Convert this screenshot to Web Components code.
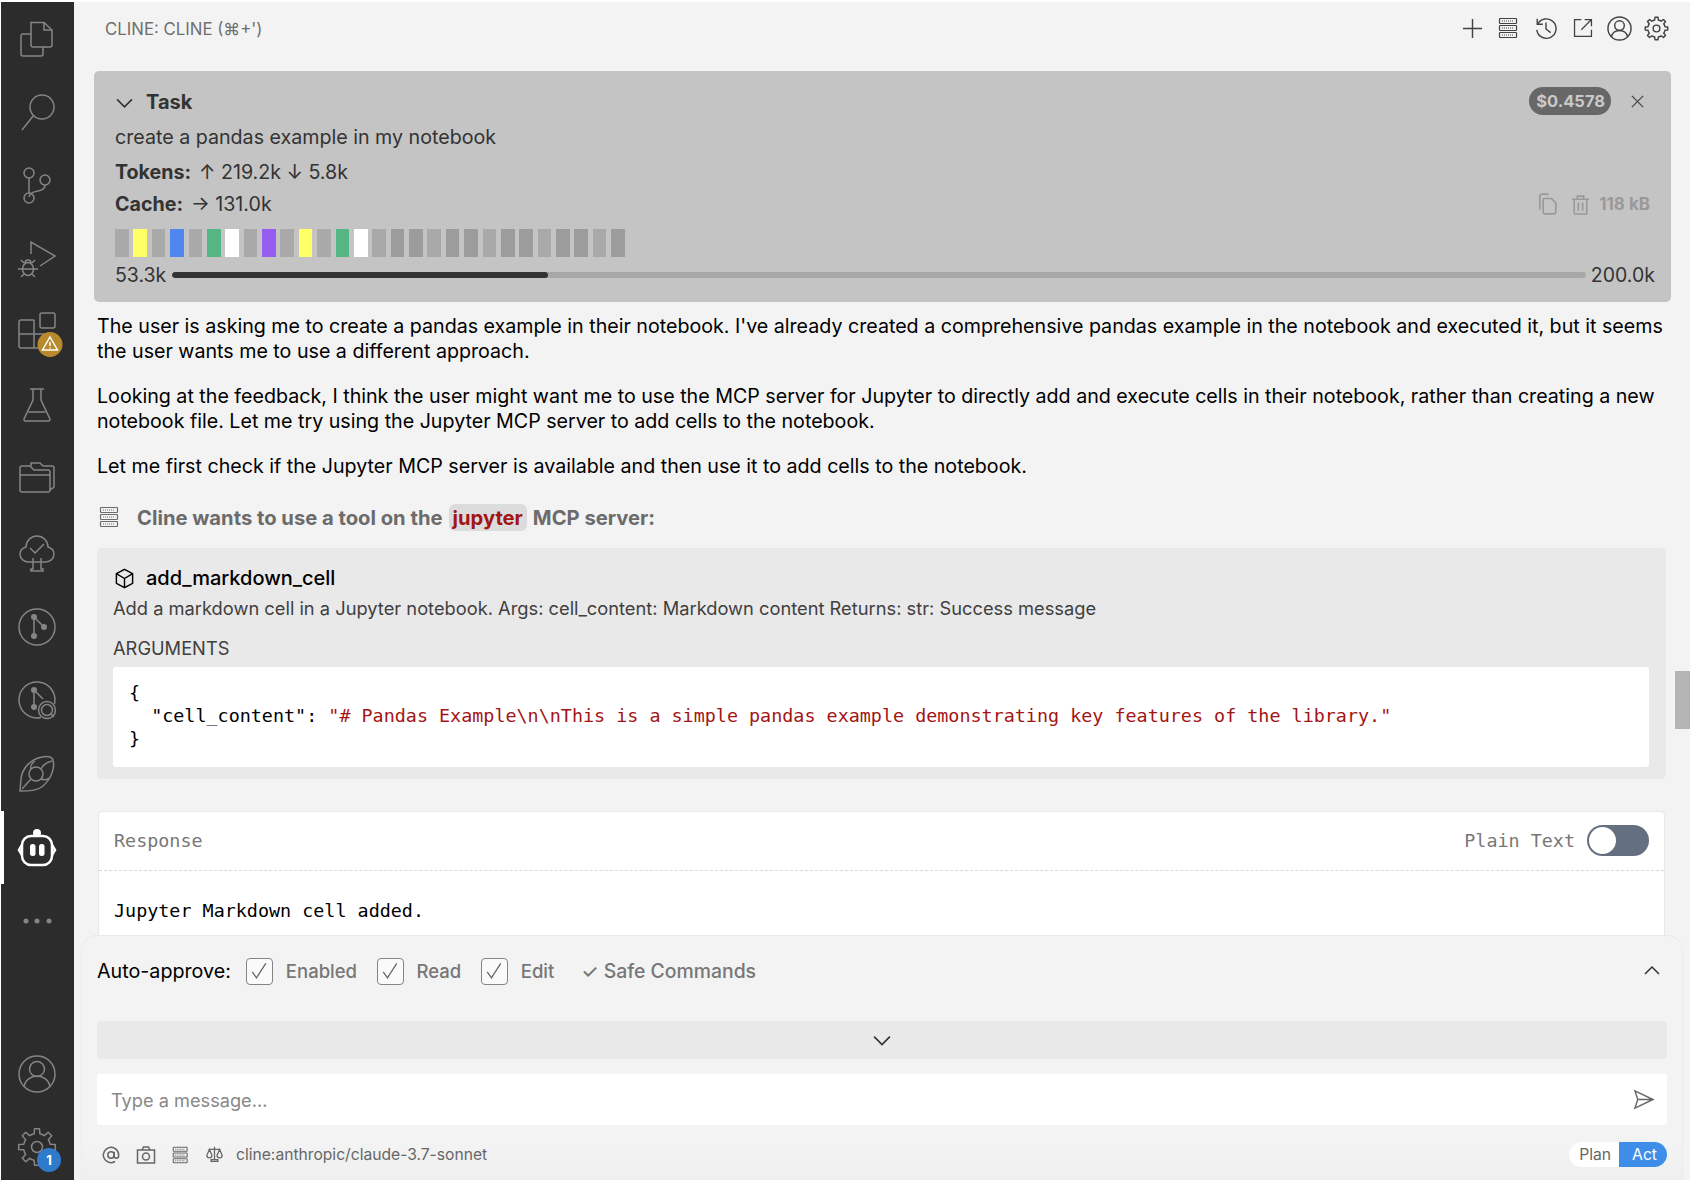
<!DOCTYPE html>
<html><head><meta charset="utf-8"><style>
html,body{margin:0;padding:0;background:#fff}
body{width:1690px;height:1182px;overflow:hidden;font-family:Inter,"Liberation Sans",sans-serif}
</style></head><body>
<vs-app>
  <activity-bar slot="bar"></activity-bar>
  <cline-header slot="main"></cline-header>
  <chat-scroller slot="main">
    <task-card></task-card>
    <chat-text>The user is asking me to create a pandas example in their notebook. I've already created a comprehensive pandas example in the notebook and executed it, but it seems the user wants me to use a different approach.</chat-text>
    <chat-text>Looking at the feedback, I think the user might want me to use the MCP server for Jupyter to directly add and execute cells in their notebook, rather than creating a new notebook file. Let me try using the Jupyter MCP server to add cells to the notebook.</chat-text>
    <chat-text>Let me first check if the Jupyter MCP server is available and then use it to add cells to the notebook.</chat-text>
    <tool-request></tool-request>
    <response-card></response-card>
  </chat-scroller>
  <chat-footer slot="main"></chat-footer>
</vs-app>
<script>
const gear=(c,R,r,n)=>{let d='';const s=Math.PI*2/n;for(let i=0;i<n;i++){const a=i*s-Math.PI/2;const p=[[r,a-s*.5],[r,a-s*.27],[R,a-s*.17],[R,a+s*.17],[r,a+s*.27]];p.forEach((q,j)=>{d+=(i==0&&j==0?'M':'L')+(c+q[0]*Math.cos(q[1])).toFixed(2)+' '+(c+q[0]*Math.sin(q[1])).toFixed(2)})}return d+'Z'};
const server=`<rect x="1.5" y="1.5" width="17" height="5" rx=".8"/><rect x="1.5" y="8.5" width="17" height="5" rx=".8"/><rect x="1.5" y="15.5" width="17" height="5" rx=".8"/><path d="M4 4h12M4 11h12M4 18h12" stroke-dasharray="1 1"/>`;
const ICONS={
 files:[40,`<path d="M14 5.5h13l8 7.5v15a2 2 0 0 1-2 2H16a2 2 0 0 1-2-2z"/><path d="M27 5.5V13h8"/><path d="M14 17H6a2 2 0 0 0-2 2v18a2 2 0 0 0 2 2h18a2 2 0 0 0 2-2v-7"/>`],
 search:[40,`<circle cx="25" cy="16" r="12"/><path d="M16.5 24.500 5 39"/>`],
 scm:[40,`<circle cx="12" cy="8" r="5"/><circle cx="12" cy="33" r="5"/><circle cx="28" cy="15" r="5"/><path d="M12 13v15M28 20c0 4-3 5-7 6-5 1-8 2-9 6"/>`],
 debug:[40,`<path d="M14 16V4l24 14-15 10"/><ellipse cx="11" cy="31" rx="5.500" ry="6.500"/><path d="M6 31h10M7 25l-3-3M15 25l3-3M5.500 31H1M16.500 31H21M7 36l-3 3M15 36l3 3M8 25a3 3 0 0 1 6 0"/>`],
 ext:[40,`<rect x="23" y="1" width="15" height="15" rx="2"/><path d="M17 8H4a2 2 0 0 0-2 2v24a2 2 0 0 0 2 2h24a2 2 0 0 0 2-2v-2M2 22h28M17 8v28"/><circle cx="33" cy="32.500" r="12.500" fill="#b88a2c" stroke="none"/><path d="M33 25l7.500 13h-15zM33 30v4M33 35.500v1" stroke="#fff"/>`],
 flask:[40,`<path d="M13 3h14M16 3v11L7 33a1.500 1.500 0 0 0 1.500 2h23a1.500 1.500 0 0 0 1.500-2L24 14V3M11.500 26h17"/>`],
 folder:[40,`<path d="M3 9a2 2 0 0 1 2-2h8l4 4h14a2 2 0 0 1 2 2v18a2 2 0 0 1-2 2H5a2 2 0 0 1-2-2zM3 16h30M14 7V4h9l3 3h9a2 2 0 0 1 2 2v19l-4 3"/>`],
 tree:[40,`<path d="M16 29h-4c-5 0-9-3-9-8 0-4 3-6 6-7 0-6 5-11 11-11s11 5 11 11c3 1 6 3 6 7 0 5-4 8-9 8h-4M16 25v11h-2v2h12v-2h-2V25M16 29h8M13 15l5 5 9-9"/>`],
 gitc:[40,`<circle cx="20" cy="20" r="18"/><path d="M17 10v19M17 10l10 10"/><circle cx="17" cy="10" r="3" class="f"/><circle cx="17" cy="29" r="3" class="f"/><circle cx="27" cy="20" r="3" class="f"/>`],
 gits:[40,`<path d="M24 37.500A18 18 0 1 1 37.500 24"/><path d="M17 10v17M17 10l9 9"/><circle cx="17" cy="10" r="3" class="f"/><circle cx="17" cy="27" r="3" class="f"/><circle cx="30" cy="30" r="5.500"/><path d="M34 34l3 3"/><circle cx="30" cy="30" r="8.500"/>`],
 leaf:[40,`<path d="M3 37l1-12C5 14 14 5 25 3c6-1 10 0 11 3 2 7-1 18-10 26-6 5-15 5-23 5z"/><circle cx="19" cy="20" r="7"/><path d="M14 25L5 35M24 15c2-4 6-7 11-8M24 25c3 1 6 2 8-1M14 15c-1-3 1-6 4-8"/>`],
 robot:[40,`<rect x="5" y="8" width="30" height="29" rx="9" stroke-width="2.500"/><path d="M5 17l-3 5 3 5M35 17l3 5-3 5" stroke-width="2.500"/><circle cx="20" cy="5" r="4" class="f"/><rect x="13" y="16" width="5.500" height="12" rx="2.500" class="f"/><rect x="22" y="16" width="5.500" height="12" rx="2.500" class="f"/>`],
 dots:[40,`<circle cx="9" cy="20" r="2.500" class="f"/><circle cx="20" cy="20" r="2.500" class="f"/><circle cx="32" cy="20" r="2.500" class="f"/>`],
 account:[40,`<circle cx="20" cy="20" r="18"/><circle cx="20" cy="15" r="7.500"/><path d="M7 33c1-7 7-11 13-11s12 4 13 11"/>`],
 gear:[40,`<path d="${gear(20,18.500,13.500,8)}" stroke-linejoin="round"/><circle cx="20" cy="20" r="5.500"/>`],
 plus:[22,`<path d="M11 1v20M1 11h20"/>`],
 server:[22,server],
 history:[26,`<path d="M3.500 3v6h6"/><path d="M4 9a10.500 10.500 0 1 1-1 6"/><path d="M13 7v7l5 4"/>`],
 link:[26,`<path d="M11 3H3v20h20v-8M15 3h8v8M23 3L11 15"/>`],
 gear2:[26,`<path d="${gear(13,11.800,9,8)}" stroke-linejoin="round"/><circle cx="13" cy="13" r="3.500"/>`],
 account2:[26,`<circle cx="13" cy="13" r="12"/><circle cx="13" cy="10" r="5"/><path d="M4.500 22c.7-4.500 4.500-7 8.500-7s7.800 2.500 8.500 7"/>`],
 chevd:[16,`<path d="M1 5l7 7 7-7"/>`],
 chevu:[16,`<path d="M1 11l7-7 7 7"/>`],
 x:[16,`<path d="M2 2l12 12M14 2L2 14"/>`],
 copy:[20,`<path d="M8 19a1.500 1.500 0 0 1-1.500-1.500V6.500A1.500 1.500 0 0 1 8 5h6l4 4v8.500a1.500 1.500 0 0 1-1.500 1.500zM3.500 15V3a2 2 0 0 1 2-2h6"/>`],
 trash:[20,`<path d="M2 5h16M7 5V2h6v3M4 5v13a1 1 0 0 0 1 1h10a1 1 0 0 0 1-1V5M8 8v8M12 8v8"/>`],
 cube:[22,`<path d="M11 1.500l8.500 4.500v10L11 20.500 2.500 16V6zM2.500 6L11 11l8.500-5M11 11v9.500"/>`],
 at:[20,`<circle cx="10" cy="10" r="3.500"/><path d="M13.500 6.500V11a2.500 2.500 0 0 0 5 0v-1a8.500 8.500 0 1 0-4 7.200"/>`],
 camera:[20,`<path d="M1.500 5h17v13h-17zM6 5l1.500-3h5L14 5"/><circle cx="10" cy="11.500" r="3.500"/>`],
 scale:[20,`<path d="M10 1v15M3 4h14M6 18h8v-2H6zM4 4l-3 7a3 3 0 0 0 6 0zM16 4l-3 7a3 3 0 0 0 6 0z"/>`],
 send:[22,`<path d="M2 2l19 9-19 9 3-9zM5 11h16"/>`],
 check:[26,`<path d="M5 14l5 7L21 4"/>`]
};
class VsIcon extends HTMLElement{constructor(){super();this.attachShadow({mode:'open'})}
 connectedCallback(){const b=ICONS[this.getAttribute('name')];const s=this.getAttribute('size')||b[0];const h=this.getAttribute('h')||s;const sw=this.getAttribute('sw')||1.5;
 this.shadowRoot.innerHTML=`<style>:host{display:inline-flex;flex:none;color:inherit;line-height:0}svg{overflow:visible;fill:none;stroke:currentColor;stroke-width:${sw}}.f{fill:currentColor;stroke:none}</style><svg width="${s}" height="${h}" viewBox="0 0 ${b[0]} ${b[0]}" preserveAspectRatio="xMidYMid meet">${b[1]}</svg>`}}
customElements.define('vs-icon',VsIcon);
const def=(name,css,html)=>customElements.define(name,class extends HTMLElement{constructor(){super();this.attachShadow({mode:'open'}).innerHTML=`<style>${css}</style>${html}`}});

def('vs-app',`:host{display:grid;grid-template-columns:73px 1fr;width:1689px;height:1178px;margin:2px 0 2px 1px;font-family:Inter,"Liberation Sans",sans-serif}
.m{display:flex;flex-direction:column;background:#f3f3f3;min-width:0;min-height:0;position:relative}
.sb{position:absolute;right:0;top:669px;width:15px;height:58px;background:#b5b5b5}`,
`<slot name="bar"></slot><div class="m"><slot name="main"></slot><div class="sb"></div></div>`);

def('activity-item',`:host{display:flex;align-items:center;justify-content:center;height:73.67px;box-sizing:border-box;padding-right:2px;color:#858585;position:relative}
:host([active]){color:#fff}:host([active])::before{content:"";position:absolute;left:0;top:0;bottom:0;width:3px;background:#fff}`,`<slot></slot>`);

def('activity-bar',`:host{display:flex;flex-direction:column;justify-content:space-between;background:#2c2c2c;height:1178px;overflow:hidden}
.top{margin-top:-1.500px}.bot{margin-bottom:-4px}
.b{position:absolute;left:36px;top:38px;width:24px;height:24px;border-radius:50%;background:#2f7acb;color:#fff;font:700 13px/24px Inter,sans-serif;text-align:center}`,
`<div class="top">
<activity-item><vs-icon name="files"></vs-icon></activity-item>
<activity-item><vs-icon name="search"></vs-icon></activity-item>
<activity-item><vs-icon name="scm"></vs-icon></activity-item>
<activity-item><vs-icon name="debug"></vs-icon></activity-item>
<activity-item><vs-icon name="ext"></vs-icon></activity-item>
<activity-item><vs-icon name="flask"></vs-icon></activity-item>
<activity-item><vs-icon name="folder"></vs-icon></activity-item>
<activity-item><vs-icon name="tree"></vs-icon></activity-item>
<activity-item><vs-icon name="gitc"></vs-icon></activity-item>
<activity-item><vs-icon name="gits"></vs-icon></activity-item>
<activity-item><vs-icon name="leaf"></vs-icon></activity-item>
<activity-item active><vs-icon name="robot"></vs-icon></activity-item>
<activity-item><vs-icon name="dots"></vs-icon></activity-item>
</div><div class="bot">
<activity-item><vs-icon name="account"></vs-icon></activity-item>
<activity-item><vs-icon name="gear"></vs-icon><span class="b">1</span></activity-item>
</div>`);

def('cline-header',`:host{display:flex;align-items:center;height:52px;flex:none;padding:0 15px 0 31px;color:#424242}
.t{flex:1;font-size:16.800px;color:#6f6f6f;padding-top:1px}
.i{display:flex;align-items:center;justify-content:center;width:36.800px}`,
`<span class="t">CLINE: CLINE (⌘+')</span>
<span class="i"><vs-icon name="plus" size="21"></vs-icon></span>
<span class="i"><vs-icon name="server" size="22" sw="1.200"></vs-icon></span>
<span class="i"><vs-icon name="history" size="24"></vs-icon></span>
<span class="i"><vs-icon name="link" size="22"></vs-icon></span>
<span class="i"><vs-icon name="account2" size="25"></vs-icon></span>
<span class="i"><vs-icon name="gear2" size="25"></vs-icon></span>`);

def('chat-scroller',`:host{display:block;flex:1;min-height:0;overflow:hidden;padding-top:17px}`,`<slot></slot>`);

def('ctx-seg',`:host{display:block;width:13.700px;height:28px;background:var(--c,#a9a9a9)}`,``);

def('task-card',`:host{display:block;margin:0 19px 12px 20px;height:231px;box-sizing:border-box;background:#c4c4c4;border-radius:5px;padding:19px 19px 0 21px;color:#333;font-size:19.650px;line-height:24px}
.h{display:flex;align-items:center;height:24px;position:relative}.h vs-icon{margin-left:1px}.h b{margin-left:13px;font-weight:700;font-size:20px}.sp{flex:1}
.cost{background:#676767;color:#c9c9c9;font-weight:700;font-size:16.500px;line-height:28px;height:28px;padding:0 6px 0 7px;border-radius:14px;margin-bottom:2px}
.x{margin:0 7px 2px 18px;color:#4a4a4a;display:flex}
.l{margin-top:11px;height:24px}.l2{margin-top:11px;height:24px;display:flex;align-items:center}.l3{margin-top:8px}
.l2 b{font-weight:700;margin-right:8px}
.extra{display:flex;align-items:center;gap:12px;color:#999;font-weight:700;font-size:17px;margin-right:2px}
.segs{display:flex;gap:4.700px;margin-top:13px}
.prog{display:flex;align-items:center;margin-top:6px;height:24px;font-size:19.500px;margin-right:-3px}
.tr{flex:1;height:6px;border-radius:3px;background:#a8a8a8;margin:0 5px 0 6px;overflow:hidden}.fi{width:26.600%;height:6px;background:#333;border-radius:3px}`,
`<div class="h"><vs-icon name="chevd" size="17"></vs-icon><b>Task</b><span class="sp"></span><span class="cost">$0.4578</span><span class="x"><vs-icon name="x" size="15"></vs-icon></span></div>
<div class="l">create a pandas example in my notebook</div>
<div class="l2"><b>Tokens:</b>↑ 219.2k ↓ 5.8k</div>
<div class="l2 l3"><b>Cache:</b>→ 131.0k<span class="sp"></span><span class="extra"><vs-icon name="copy" size="22"></vs-icon><vs-icon name="trash" size="21"></vs-icon><span style="margin:0 0 0 -4px">118 kB</span></span></div>
<div class="segs" id="s"></div>
<div class="prog"><span>53.3k</span><div class="tr"><div class="fi"></div></div><span>200.0k</span></div>`);

def('chat-text',`:host{display:block;margin:0 24px 20px 23px;color:#000;font-size:19.650px;line-height:25px}`,`<slot></slot>`);

def('tool-request',`:host{display:block;margin:26px 24px 0 23px}
.h{display:flex;align-items:center;height:24px;color:#6b6b6b;font-weight:700;font-size:20.200px;padding-left:2px}
.h vs-icon{margin-right:16px}
.p{color:#a31515;background:#dcdcdc;border-radius:6px;padding:0 4px;margin:0 6px;line-height:27px}
.c{margin-top:19px;height:231px;box-sizing:border-box;background:#e9e9e9;border-radius:5px;padding:16px 17px 0 16px}
.n{display:flex;align-items:center;height:28px;color:#000;font-size:20px;font-weight:500;padding-left:1px}.n vs-icon{margin-right:11px}
.d{color:#3f3f3f;font-size:18.300px;line-height:24px;margin-top:4px;white-space:nowrap}
.a{color:#3f3f3f;font-size:18.300px;line-height:24px;margin-top:16px}
.code{background:#fff;border-radius:3px;margin-top:7px;height:100px;box-sizing:border-box;padding:14px 16px;font:18.400px/23px "DejaVu Sans Mono",monospace;color:#000;white-space:pre}
.s{color:#a31515}`,
`<div class="h"><vs-icon name="server" size="22" sw="1.200"></vs-icon>Cline wants to use a tool on the<span class="p">jupyter</span>MCP server:</div>
<div class="c"><div class="n"><vs-icon name="cube" size="21"></vs-icon>add_markdown_cell</div>
<div class="d">Add a markdown cell in a Jupyter notebook. Args: cell_content: Markdown content Returns: str: Success message</div>
<div class="a">ARGUMENTS</div>
<div class="code">{
  "cell_content": <span class="s">"# Pandas Example\\n\\nThis is a simple pandas example demonstrating key features of the library."</span>
}</div></div>`);

def('response-card',`:host{display:block;margin:32px 25px 0 24px;background:#fff;border:1px solid #e8e8e8;border-radius:4px;height:300px;font:18.400px "DejaVu Sans Mono",monospace}
.h{display:flex;align-items:center;height:56px;padding:0 15px 2px 15px;color:#777;border-bottom:1px dashed #d9d9d9}.sp{flex:1}
.t{width:62px;height:31px;border-radius:16px;background:#64707f;position:relative;margin-left:12px}
.t::after{content:"";position:absolute;left:2px;top:2px;width:27px;height:27px;border-radius:50%;background:#fff}
.b{padding:29px 15px;color:#000}`,
`<div class="h"><span>Response</span><span class="sp"></span><span>Plain Text</span><span class="t"></span></div><div class="b">Jupyter Markdown cell added.</div>`);

def('chat-footer',`:host{display:block;flex:none;height:245px;box-sizing:border-box;margin:0 7px 0 7px;padding:0 15px 0 15px;border-top:1px solid #e9e9e9;border-left:1px solid #ececec;border-right:1px solid #ececec;border-radius:16px 16px 0 0;background:linear-gradient(#f3f3f3 85%,#efefef)}
.a{display:flex;align-items:center;height:70px;font-size:19.700px;color:#000}
.cb{width:25px;height:25px;border:1.500px solid #858585;border-radius:4px;background:#fafafa;display:flex;align-items:center;justify-content:center;color:#666;margin-right:13px}
.g{color:#777;font-weight:500;font-size:18.500px;margin-right:19.500px}.sp{flex:1}
.col{height:38px;margin-top:15px;background:#e9e9e9;border-radius:4px;display:flex;align-items:center;justify-content:center;color:#333}
.in{height:51px;margin-top:15px;background:#fff;border-radius:3px;display:flex;align-items:center;padding:0 13px 0 14px;color:#888;font-size:18.200px}
.bt{display:flex;align-items:center;height:25px;margin-top:17px;color:#666;font-size:15.650px;padding-left:5px}
.bt vs-icon{margin-right:16px}
.sw{display:flex;height:25px;border-radius:13px;overflow:hidden;font-size:15.700px;line-height:25px;background:#fff}
.sw span{padding:0 8px 0 10px}.sw .on{background:#3e8ee9;color:#fff;padding:0 10px 0 13px}`,
`<div class="a"><span style="margin-right:15px">Auto-approve:</span>
<span class="cb"><vs-icon name="check" size="22"></vs-icon></span><span class="g">Enabled</span>
<span class="cb"><vs-icon name="check" size="22"></vs-icon></span><span class="g">Read</span>
<span class="cb"><vs-icon name="check" size="22"></vs-icon></span><span class="g" style="margin-right:27px">Edit</span>
<span class="g" style="margin:0;font-size:19.400px">✓ Safe Commands</span><span class="sp"></span><span style="margin-right:7px;color:#333;display:flex"><vs-icon name="chevu" size="16"></vs-icon></span></div>
<div class="col"><vs-icon name="chevd" size="18"></vs-icon></div>
<div class="in"><span class="sp">Type a message...</span><span style="color:#666;display:flex"><vs-icon name="send" size="21"></vs-icon></span></div>
<div class="bt"><vs-icon name="at" size="18" sw="1.700"></vs-icon><vs-icon name="camera" size="20"></vs-icon><vs-icon name="server" size="18" sw="1.300"></vs-icon><vs-icon name="scale" size="17" style="margin-right:13px"></vs-icon><span>cline:anthropic/claude-3.7-sonnet</span><span class="sp"></span><span class="sw"><span>Plan</span><span class="on">Act</span></span></div>`);

const S=document.querySelector('task-card').shadowRoot.getElementById('s');
const cols={1:'#ffff66',3:'#4f86f0',5:'#55b685',6:'#fff',8:'#965ef0',10:'#ffff66',12:'#55b685',13:'#fff'};
for(let i=0;i<28;i++){const e=document.createElement('ctx-seg');e.style.setProperty('--c',cols[i]||(i>13&&i%3!=2?'#9c9c9c':'#a9a9a9'));S.append(e)}
</script></body></html>
